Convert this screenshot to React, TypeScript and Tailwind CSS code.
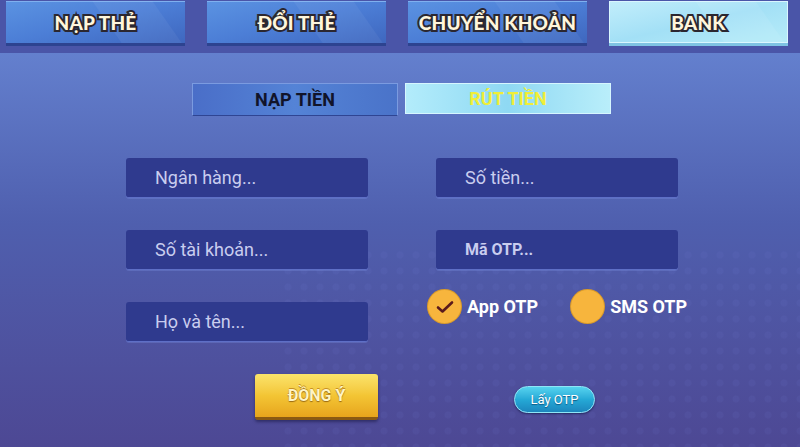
import React from "react";

const heavy =
  "font-['Lato','Liberation_Sans',sans-serif] font-black text-[#fff6dc] [-webkit-text-stroke:4px_#2b2730] [paint-order:stroke_fill] tracking-[0.2px]";

function TopTab({ label, active }: { label: string; active?: boolean }) {
  return (
    <div
      className={
        "relative flex h-[45px] w-[179px] items-center justify-center overflow-hidden border-b-[3px] " +
        (active
          ? "border-[#7fc3e3] bg-gradient-to-br from-[#c2eefb] via-[#a3e0f6] to-[#b6ecf8] shadow-[inset_0_0_0_1px_#d9f6ff]"
          : "border-[#2d4390] bg-gradient-to-br from-[#5b93e2] via-[#4c7ed6] to-[#3f67bf] shadow-[inset_0_1px_0_#7fb0ef]")
      }
    >
      <div
        className={
          "absolute right-[18px] top-0 h-full w-[60px] skew-x-[35deg] " +
          (active ? "bg-white/[0.07]" : "bg-white/5")
        }
      />
      <span className={"relative text-[19px] leading-none " + heavy}>{label}</span>
    </div>
  );
}

function Field({ text, bold }: { text: string; bold?: boolean }) {
  return (
    <div className="flex h-[40px] items-center rounded-[3px] border-b border-[#5e6fc6] bg-[#2f3a8e] pl-[29px] shadow-[0_1px_0_rgba(120,140,220,0.35)]">
      <span
        className={
          "font-['Roboto','Liberation_Sans',sans-serif] text-[#c9cdef] " +
          (bold ? "text-[16px] font-bold" : "text-[18px]")
        }
      >
        {text}
      </span>
    </div>
  );
}

function Radio({ label, checked }: { label: string; checked?: boolean }) {
  return (
    <div className="flex shrink-0 items-center gap-[6px] whitespace-nowrap">
      <div className="flex h-[33px] w-[33px] items-center justify-center rounded-full bg-[#f7b53d] shadow-[0_0_0_1px_#d99a2a]">
        {checked && (
          <svg width="18" height="14" viewBox="0 0 18 14">
            <path
              d="M2 7.5 L6.5 11.5 L16 2.5"
              fill="none"
              stroke="#5a1a1c"
              strokeWidth="2.6"
              strokeLinecap="round"
              strokeLinejoin="round"
            />
          </svg>
        )}
      </div>
      <span className="font-['Roboto','Liberation_Sans',sans-serif] text-[18px] font-bold text-white">
        {label}
      </span>
    </div>
  );
}

export default function App() {
  return (
    <div className="relative h-[447px] w-[800px] overflow-hidden bg-gradient-to-b from-[#6a8ad8] via-[#4f5fae] to-[#4d4894]">
      {/* faint diamond texture near the bottom right */}
      <div className="pointer-events-none absolute bottom-0 right-0 h-[200px] w-[520px] bg-[radial-gradient(circle,rgba(120,130,220,0.12)_3px,transparent_4px)] bg-[length:16px_16px] opacity-70" />

      {/* tab strip */}
      <div className="relative flex h-[53px] gap-[22px] bg-[#4a55a8] pl-[6px] pt-[1px]">
        <TopTab label="NẠP THẺ" />
        <TopTab label="ĐỔI THẺ" />
        <TopTab label="CHUYỂN KHOẢN" />
        <TopTab label="BANK" active />
      </div>

      <div className="relative flex flex-col">
        {/* sub tabs */}
        <div className="mt-[30px] flex gap-[7px] pl-[192px]">
          <div className="flex h-[33px] w-[206px] items-center justify-center border border-[#7b9be0] border-b-[#2f4593] bg-gradient-to-r from-[#4a6ec8] via-[#5483d6] to-[#4a73c9]">
            <span className="font-['Roboto','Liberation_Sans',sans-serif] text-[18px] font-bold text-[#11142a]">
              NẠP TIỀN
            </span>
          </div>
          <div className="flex h-[31px] w-[206px] items-center justify-center border border-[#d6f6ff] bg-gradient-to-r from-[#b3ecfb] via-[#8fd9f3] to-[#b9eefa]">
            <span className="font-['Roboto','Liberation_Sans',sans-serif] text-[18px] font-bold text-[#f0ee38]">
              RÚT TIỀN
            </span>
          </div>
        </div>

        {/* form */}
        <div className="mt-[42px] grid grid-cols-[242px_242px] gap-x-[68px] gap-y-[32px] pl-[126px]">
          <Field text="Ngân hàng..." />
          <Field text="Số tiền..." />
          <Field text="Số tài khoản..." />
          <Field text="Mã OTP..." bold />
          <Field text="Họ và tên..." />
          <div className="-ml-[8px] -mt-[12px] flex w-[300px] items-start gap-[33px]">
            <Radio label="App OTP" checked />
            <Radio label="SMS OTP" />
          </div>
        </div>

        {/* actions */}
        <div className="mt-[32px] flex items-start pl-[255px]">
          <div className="flex h-[46px] w-[123px] items-center justify-center rounded-[3px] border-b-[3px] border-[#8a5a12] bg-gradient-to-b from-[#fbe46a] via-[#f3c534] to-[#e7a51c] shadow-[0_2px_3px_rgba(20,20,60,0.5)]">
            <span className="font-['Roboto','Liberation_Sans',sans-serif] text-[16px] font-bold text-[#fff4c4] [text-shadow:0_1px_1px_#9a6a12,0_-1px_0_#c89024]">
              ĐỒNG Ý
            </span>
          </div>
          <div className="ml-[136px] mt-[12px] flex h-[27px] w-[81px] items-center justify-center rounded-full border border-[#8fe6f7] bg-gradient-to-b from-[#55d3ef] via-[#25a9d6] to-[#1c86bd] shadow-[0_1px_2px_rgba(10,20,60,0.6)]">
            <span className="font-['Roboto','Liberation_Sans',sans-serif] text-[13px] text-white [text-shadow:0_1px_1px_#0d5a85]">
              Lấy OTP
            </span>
          </div>
        </div>
      </div>
    </div>
  );
}
